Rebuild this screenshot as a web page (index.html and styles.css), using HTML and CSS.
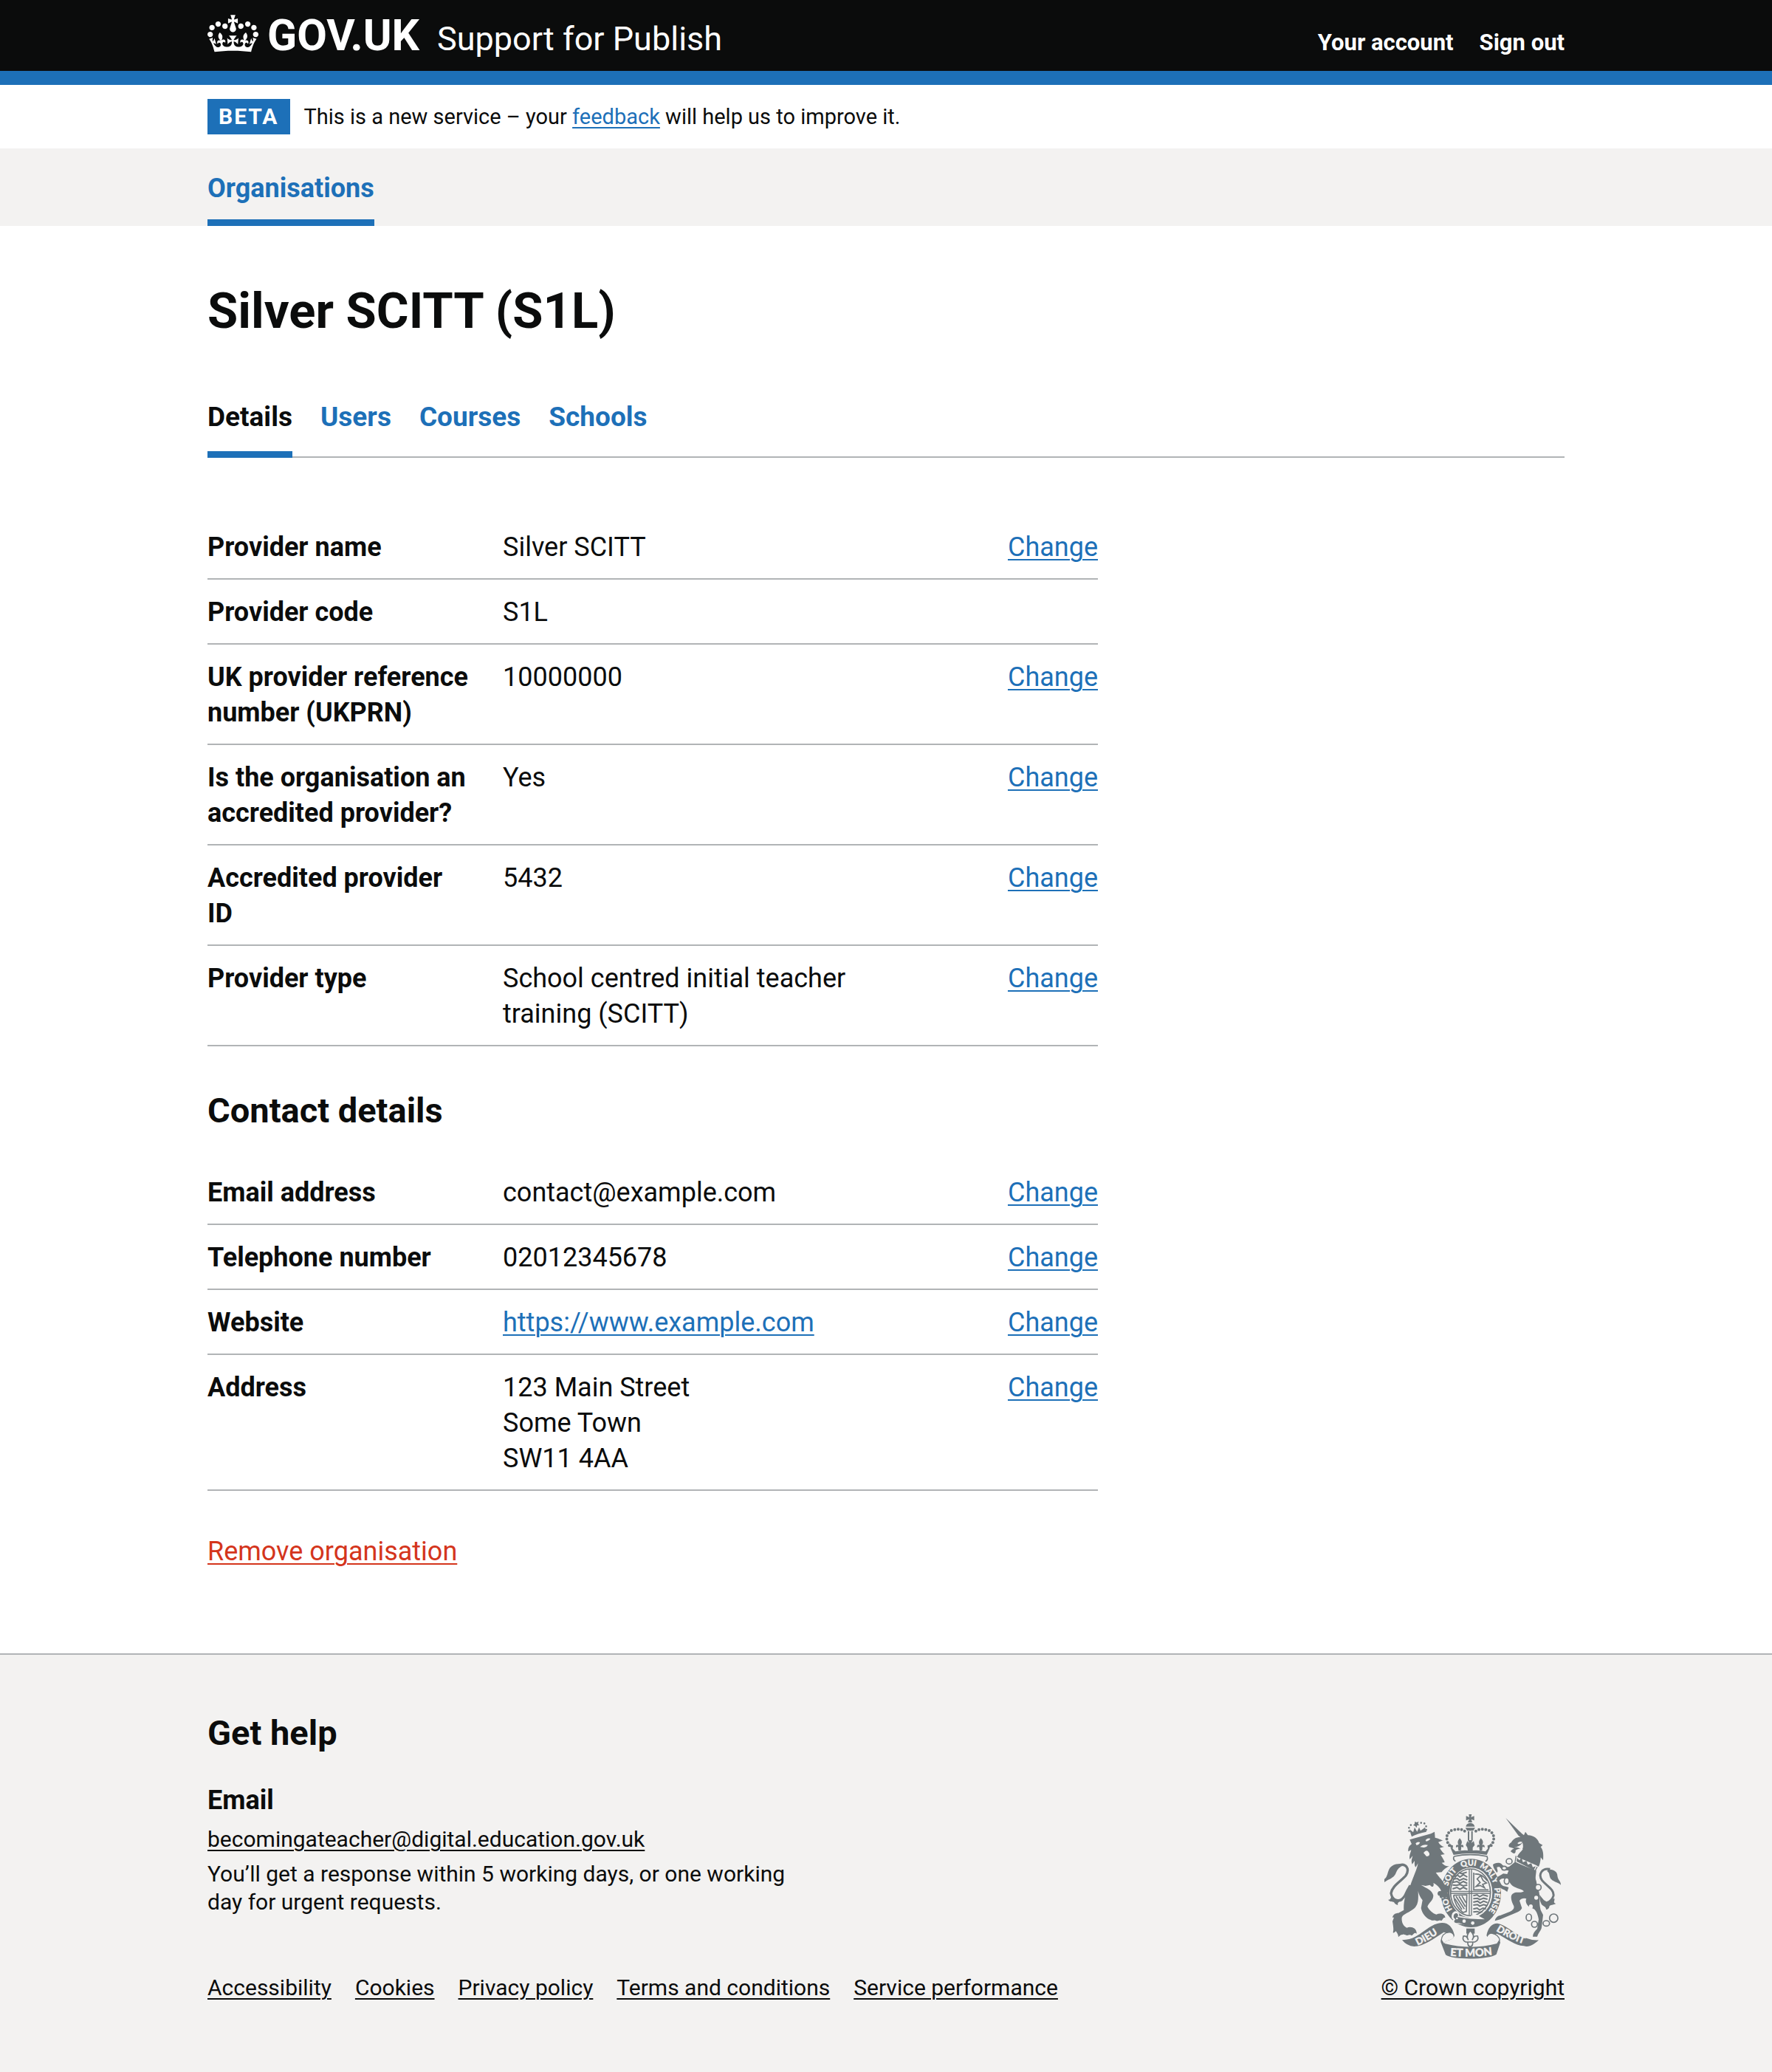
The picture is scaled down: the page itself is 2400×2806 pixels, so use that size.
FILE: index.html
```html
<!DOCTYPE html>
<html lang="en">
<head>
<meta charset="utf-8">
<meta name="viewport" content="width=device-width, initial-scale=1">
<title>Silver SCITT (S1L) - Support for Publish - GOV.UK</title>
<link rel="stylesheet" href="styles.css">
</head>
<body>
<header class="header">
  <div class="container header-inner">
    <div class="header-brand">
      <a class="logo" href="#">
        <svg class="logo-crown" viewBox="0 0 132 97" aria-hidden="true"><path fill="currentColor" fill-rule="evenodd" d="M25 30.2c3.5 1.5 7.7-.2 9.1-3.7 1.5-3.6-.2-7.8-3.9-9.2-3.6-1.4-7.6.3-9.1 3.9-1.4 3.5.3 7.5 3.9 9zM9 39.5c3.6 1.5 7.8-.2 9.2-3.7 1.5-3.6-.2-7.8-3.9-9.1-3.6-1.5-7.6.2-9.1 3.8-1.4 3.5.3 7.5 3.8 9zM4.4 57.2c3.5 1.5 7.7-.2 9.1-3.8 1.5-3.6-.2-7.7-3.9-9.1-3.5-1.5-7.6.3-9.1 3.8-1.4 3.5.3 7.6 3.9 9.1zm38.3-21.4c3.5 1.5 7.7-.2 9.1-3.8 1.5-3.6-.2-7.7-3.9-9.1-3.6-1.5-7.6.3-9.1 3.8-1.3 3.6.4 7.7 3.9 9.1zm64.4-5.6c-3.6 1.5-7.8-.2-9.1-3.7-1.5-3.6.2-7.8 3.8-9.2 3.6-1.4 7.7.3 9.2 3.9 1.3 3.5-.4 7.5-3.9 9zm15.9 9.3c-3.6 1.5-7.7-.2-9.1-3.7-1.5-3.6.2-7.8 3.7-9.1 3.6-1.5 7.7.2 9.2 3.8 1.5 3.5-.3 7.5-3.8 9zm4.7 17.7c-3.6 1.5-7.8-.2-9.2-3.8-1.5-3.6.2-7.7 3.9-9.1 3.6-1.5 7.7.3 9.2 3.8 1.3 3.5-.4 7.6-3.9 9.1zM89.3 35.8c-3.6 1.5-7.8-.2-9.2-3.8-1.4-3.6.2-7.7 3.9-9.1 3.6-1.5 7.7.3 9.2 3.8 1.4 3.6-.3 7.7-3.9 9.1zM69.7 17.7l8.9 4.7V9.3l-8.9 2.8c-.2-.3-.5-.6-.9-.9L72.4 0H59.6l3.5 11.2c-.3.3-.6.5-.9.9l-8.8-2.8v13.1l8.8-4.7c.3.3.6.7.9.9l-5 15.4v.1c-.2.8-.4 1.6-.4 2.4 0 4.1 3.1 7.5 7 8.1h.2c.3 0 .7.1 1 .1.4 0 .7 0 1-.1h.2c4-.6 7.1-4.1 7.1-8.1 0-.8-.1-1.7-.4-2.4V34l-5.1-15.4c.4-.2.7-.6 1-.9zM66 92.8c16.9 0 32.8 1.1 47.1 3.2 4-16.9 8.9-26.7 14-33.5l-9.6-3.4c1 4.9 1.1 7.2 0 10.2-1.5-1.4-3-4.3-4.2-8.7L108.6 76c2.8-2 5-3.2 7.5-3.3-4.4 9.4-10 11.9-13.6 11.2-4.3-.8-6.3-4.6-5.6-7.9 1-4.7 5.7-5.9 8-.5 4.3-8.7-3-11.4-7.6-8.8 7.1-7.2 7.9-13.5 2.1-21.1-8 6.1-8.1 12.3-4.5 20.8-4.7-5.4-12.1-2.5-9.5 6.2 3.4-5.2 7.9-2 7.2 3.1-.6 4.3-6.4 7.8-13.5 7.2-10.3-.9-10.9-8-11.2-13.8 2.5-.5 7.1 1.8 11 7.3L80.2 60c-4.1 4.4-8 5.3-12.3 5.4 1.4-4.4 8-11.6 8-11.6H55.5s6.4 7.2 7.9 11.6c-4.2-.1-8-1-12.3-5.4l1.4 16.4c3.9-5.5 8.5-7.7 10.9-7.3-.3 5.8-.9 12.8-11.1 13.8-7.2.6-12.9-2.9-13.5-7.2-.7-5 3.8-8.3 7.1-3.1 2.7-8.7-4.6-11.6-9.4-6.2 3.7-8.5 3.6-14.7-4.6-20.8-5.8 7.6-5 13.9 2.2 21.1-4.7-2.6-11.9.1-7.7 8.8 2.3-5.5 7.1-4.2 8.1.5.7 3.3-1.3 7.1-5.7 7.9-3.5.7-9-1.8-13.5-11.2 2.5.1 4.7 1.3 7.5 3.3l-4.7-15.4c-1.2 4.4-2.7 7.2-4.3 8.7-1.1-3-.9-5.3 0-10.2l-9.5 3.4c5 6.9 9.9 16.7 14 33.5 14.8-2.1 30.8-3.2 47.7-3.2z"/></svg>
        <span class="logo-text">GOV.UK</span>
      </a>
      <a class="service-name" href="#">Support for Publish</a>
    </div>
    <nav class="header-nav" aria-label="Account">
      <a href="#">Your account</a>
      <a href="#">Sign out</a>
    </nav>
  </div>
</header>

<div class="container phase-banner">
  <strong class="tag">BETA</strong>
  <span class="phase-text">This is a new service – your <a class="link" href="#">feedback</a> will help us to improve it.</span>
</div>

<nav class="primary-nav" aria-label="Primary">
  <div class="container">
    <a class="primary-nav-link" href="#" aria-current="page">Organisations</a>
  </div>
</nav>

<main class="container main">
  <h1 class="page-title">Silver SCITT (S1L)</h1>

  <nav class="tabs" aria-label="Organisation">
    <a class="tab tab-current" href="#" aria-current="page">Details</a>
    <a class="tab" href="#">Users</a>
    <a class="tab" href="#">Courses</a>
    <a class="tab" href="#">Schools</a>
  </nav>

  <div class="two-thirds">
    <dl class="summary">
      <div class="summary-row"><dt>Provider name</dt><dd>Silver SCITT</dd><dd class="action"><a class="link" href="#">Change</a></dd></div>
      <div class="summary-row"><dt>Provider code</dt><dd>S1L</dd></div>
      <div class="summary-row"><dt>UK provider reference number (UKPRN)</dt><dd>10000000</dd><dd class="action"><a class="link" href="#">Change</a></dd></div>
      <div class="summary-row"><dt>Is the organisation an accredited provider?</dt><dd>Yes</dd><dd class="action"><a class="link" href="#">Change</a></dd></div>
      <div class="summary-row"><dt>Accredited provider ID</dt><dd>5432</dd><dd class="action"><a class="link" href="#">Change</a></dd></div>
      <div class="summary-row"><dt>Provider type</dt><dd>School centred initial teacher training (SCITT)</dd><dd class="action"><a class="link" href="#">Change</a></dd></div>
    </dl>

    <h2 class="section-title">Contact details</h2>
    <dl class="summary">
      <div class="summary-row"><dt>Email address</dt><dd>contact@example.com</dd><dd class="action"><a class="link" href="#">Change</a></dd></div>
      <div class="summary-row"><dt>Telephone number</dt><dd>02012345678</dd><dd class="action"><a class="link" href="#">Change</a></dd></div>
      <div class="summary-row"><dt>Website</dt><dd><a class="link" href="#">https://www.example.com</a></dd><dd class="action"><a class="link" href="#">Change</a></dd></div>
      <div class="summary-row"><dt>Address</dt><dd>123 Main Street<br>Some Town<br>SW11 4AA</dd><dd class="action"><a class="link" href="#">Change</a></dd></div>
    </dl>

    <p class="remove"><a class="link link-danger" href="#">Remove organisation</a></p>
  </div>
</main>

<footer class="footer">
  <div class="container footer-inner">
    <div class="footer-main">
      <h2 class="footer-title">Get help</h2>
      <h3 class="footer-subtitle">Email</h3>
      <p class="footer-email"><a class="link link-plain" href="#">becomingateacher@digital.education.gov.uk</a></p>
      <p class="footer-note">You’ll get a response within 5 working days, or one working day for urgent requests.</p>
      <ul class="footer-links">
        <li><a class="link link-plain" href="#">Accessibility</a></li>
        <li><a class="link link-plain" href="#">Cookies</a></li>
        <li><a class="link link-plain" href="#">Privacy policy</a></li>
        <li><a class="link link-plain" href="#">Terms and conditions</a></li>
        <li><a class="link link-plain" href="#">Service performance</a></li>
      </ul>
    </div>
    <div class="footer-meta">
      <svg class="crest" viewBox="73 81 717 588" aria-hidden="true">
        <defs>
          <path id="garter" d="M425 511A96 111 0 0 1 425 289A96 111 0 0 1 425 511"/>
          <path id="ribbon-left" d="M208 614Q252 594 306 556"/>
          <path id="ribbon-mid" d="M340 656Q425 664 512 652"/>
          <path id="ribbon-right" d="M526 554Q580 588 650 612"/>
        </defs>
        <!-- lion -->
        <g class="ink">
          <path d="M176 184L262 160L277 152L279 176C296 180 306 186 312 187L292 194C300 206 308 212 316 213L298 218C308 234 316 242 319 243L302 246C312 262 316 270 318 276L306 278C318 290 328 294 338 290C324 298 312 306 306 316L282 318C300 342 318 362 326 390L338 412C336 424 328 420 322 416C322 426 314 428 311 418C304 424 296 422 298 412C288 412 286 400 294 394L304 392C298 378 284 366 272 360C276 370 270 384 258 368L240 372L222 368C248 384 266 388 272 410C272 432 254 438 248 456C256 472 270 484 284 488C300 480 322 486 320 502C312 498 312 508 304 514C298 508 292 516 284 514C276 508 268 516 262 510C244 506 226 484 222 462L228 430C218 418 212 404 210 392C212 430 210 446 196 462C176 480 148 486 144 500C142 520 150 534 164 542C182 534 206 544 204 566C196 558 192 568 184 574C176 566 170 576 162 572C154 570 152 566 146 570C138 570 134 576 130 580C130 570 124 562 120 556C114 560 110 566 108 560C112 550 108 530 106 516L112 500L106 500C108 488 118 482 130 482L152 470C150 440 158 400 180 366C188 340 204 310 210 280L200 296C194 288 196 280 196 270L186 284C180 270 186 260 188 250L176 264C172 250 180 238 182 226L170 232C168 214 178 206 184 202Z"/>
          <path d="M146 287C132 278 108 284 96 298C84 316 88 334 73 344L72 358C90 344 108 342 118 324C124 308 130 298 146 290Z"/>
          <path d="M102 412C98 424 98 430 88 428C96 438 106 434 112 438C116 446 122 448 128 450C126 442 130 436 140 436L150 428L120 430Z"/>
        </g>
        <path class="line" stroke-width="10" d="M128 290C160 276 178 302 160 330C140 354 104 372 100 402C106 434 136 442 156 412Q166 390 178 370"/>
        <g class="paper">
          <path d="M200 199Q208 190 218 195Q214 206 203 206ZM240 186Q250 176 260 180Q254 190 243 191ZM218 214Q230 202 250 206Q246 214 234 216ZM232 238Q246 218 256 240Q258 252 244 252Z"/>
        </g>
        <!-- lion's crown -->
        <g class="ink">
          <path d="M180 160L175 142L190 154L196 134L206 152L214 134L220 148L238 134L244 152Q208 158 184 172Z"/>
          <path d="M197 111L205 114L212 110L210 120L215 126L206 126L204 136L198 128L190 126L196 120Z"/>
        </g>
        <path class="dots" stroke-width="8" d="M174 150Q168 124 190 122M243 144Q246 112 220 116"/>
        <!-- royal crown -->
        <g class="ink">
          <path d="M416 81H428L425 93L438 88V106L426 101L430 114H412L418 101L405 106V88L418 93Z"/>
          <path d="M404 131Q406 118 422 116Q438 118 440 131ZM402 136H442L434 148H410Z"/>
          <path d="M352 222L362 232Q390 226 412 228L410 216L404 206L410 190L418 198L412 186H432L426 198L436 190L440 206L432 216L432 228Q460 226 484 232L492 222L502 216L489 246Q422 234 354 246L341 216Z"/>
          <path d="M379 178Q394 194 384 206Q396 202 394 216L386 212L384 228H374L372 212L364 216Q362 202 374 206Q366 194 379 178ZM465 178Q480 194 470 206Q482 202 480 216L472 212L470 228H460L458 212L450 216Q448 202 460 206Q452 194 465 178Z"/>
          <path d="M338 196Q340 206 352 208L350 224L338 210ZM506 196Q504 206 492 208L494 224L506 210Z"/>
        </g>
        <path class="line" stroke-width="6" d="M415 150V186M429 150V186"/>
        <path class="dots" stroke-width="12" d="M337 208C318 180 326 154 350 145C376 138 398 142 406 158M507 208C526 180 518 154 494 145C468 138 446 142 438 158"/>
        <path class="line" stroke-width="5" d="M356 252Q422 238 490 252Q496 266 484 272M356 252Q350 264 362 272"/>
        <!-- garter and shield -->
        <path class="ink" fill-rule="evenodd" d="M425 262A122 139 0 1 1 425 540A122 139 0 1 1 425 262ZM425 297A87 102 0 1 0 425 501A87 102 0 1 0 425 297Z"/>
        <ellipse class="line" stroke-width="5" cx="423" cy="398" rx="81" ry="95"/>
        <path class="line" stroke-width="4" d="M418 304V490M427 304V490M342 394H504M342 402H504"/>
        <path class="line" stroke-width="6" d="M356 334l14-6l10 8l14-10l16 10M352 344l18-2l8 8l16-8l16 6M350 358l18-4l12 8l14-8l16 8M350 368l16 2l14-4l14 6l16-4M350 384l18-6l12 8l14-8l16 8M376 318l12 4l20-6M434 412l16-4l10 8l14-8l20 6M434 424l18-2l8 6l16-6l16 4M434 438l18-4l10 8l14-8l16 6M434 450l18-2l8 6l16-6l14 4M434 466l16-4l10 8l14-8l12 4M434 478l16-2l10 4l12-4"/>
        <path class="line" stroke-width="5" d="M436 318V388H496M440 324Q468 320 492 352M446 374L462 358L450 344L464 330L474 350L488 360L472 366L480 380L462 370ZM354 410L408 408L406 476L392 480Q360 456 354 410M364 414L398 466M376 414L402 456M388 412L404 440M360 424L388 468"/>
        <path class="halo" d="M352 484C366 470 378 486 372 496L414 504L440 488L476 508Q440 536 372 522C356 530 344 516 358 510Q344 500 352 484Z"/>
        <path class="ink" d="M356 488C366 476 378 488 370 498Q420 508 486 508L470 528Q430 546 376 522C360 526 350 518 362 508Q350 500 356 488Z"/>
        <g class="paper"><circle cx="397" cy="515" r="7"/><circle cx="432" cy="523" r="7"/><circle cx="368" cy="504" r="4"/></g>
        <g class="motto" font-size="32">
          <text><textPath href="#garter" startOffset="90">HON</textPath></text>
          <text><textPath href="#garter" startOffset="190">SOIT</textPath></text>
          <text><textPath href="#garter" startOffset="286">QUI</textPath></text>
          <text><textPath href="#garter" startOffset="360">MAL</textPath></text>
          <text><textPath href="#garter" startOffset="430">Y</textPath></text>
          <text><textPath href="#garter" startOffset="468">PENSE</textPath></text>
        </g>
        <path class="ink" d="M300 340C316 360 326 380 330 402L338 414Q334 426 324 418Q318 428 311 418Q302 424 298 412Q288 408 294 396L306 392Z"/>
        <!-- unicorn -->
        <g class="ink">
          <path d="M566 96L632 160L640 166L646 152L656 166C680 166 698 182 702 198L716 206L708 214C718 226 720 242 718 268L708 256C708 270 704 286 700 294L690 288L612 254C618 240 630 232 636 222C626 218 612 222 606 228C608 236 602 244 594 238L586 232C588 226 596 222 600 220L580 214C576 208 580 200 588 196C596 182 606 174 626 174L618 168Z"/>
          <path d="M602 276L690 310C690 326 684 340 690 352C692 370 700 382 702 400C706 420 700 440 708 470L718 490L712 540C710 554 700 560 694 578L676 578C676 566 684 556 694 546L700 508C694 476 684 462 668 462C650 452 644 432 650 424C640 420 628 424 622 432L632 462C626 476 610 480 596 486L544 508L522 514C524 502 532 494 544 492L584 476C598 470 604 460 596 448C588 430 584 412 594 404C610 392 624 404 640 394C626 380 604 384 588 366C576 350 580 346 572 344C556 340 546 342 540 350L548 366C556 376 566 372 578 378L572 396L560 388C552 386 546 380 540 376C532 364 528 346 532 336L556 322L572 324L578 310C564 306 550 308 540 294L530 296C532 308 536 314 530 318C522 308 516 300 514 286C520 278 540 276 548 282C556 292 568 298 580 294Z"/>
          <path d="M738 306C758 302 776 314 776 330C778 350 790 352 790 368C780 358 762 356 752 346C740 336 748 320 734 312Z"/>
          <path d="M704 408C716 424 724 436 736 436C752 436 760 420 764 424C766 434 756 440 770 444C758 450 748 448 744 454C742 464 738 468 730 468C730 458 722 456 712 448Q702 430 704 408Z"/>
        </g>
        <path class="line" stroke-width="9" d="M746 304C714 298 696 324 714 350C732 372 764 386 760 412Q754 432 734 440"/>
        <path class="line" stroke-width="4" d="M608 250L604 276L684 314L694 294"/>
        <path class="ink" d="M610 272L612 258L622 268L630 256L636 276L650 270L656 286L670 280L676 296L688 292L680 308Z"/>
        <path class="paper" d="M614 198Q624 188 634 194Q628 202 616 202ZM600 214Q624 214 634 196Q640 214 632 226Q618 214 600 214Z"/>
        <g class="chain" stroke-width="5">
          <ellipse cx="580" cy="272" rx="12" ry="11"/><ellipse cx="560" cy="300" rx="10" ry="8"/><ellipse cx="570" cy="352" rx="10" ry="13"/><ellipse cx="698" cy="378" rx="12" ry="12"/><ellipse cx="660" cy="500" rx="11" ry="14"/><ellipse cx="683" cy="528" rx="12" ry="12"/><ellipse cx="731" cy="524" rx="13" ry="11"/><circle cx="761" cy="503" r="17"/>
        </g>
        <g class="paper"><circle cx="690" cy="420" r="8"/><ellipse cx="668" cy="456" rx="8" ry="9"/></g>
        <!-- ribbon -->
        <path class="ink" d="M145 592Q178 590 196 580C236 560 262 524 308 522C334 522 350 540 358 572C356 584 344 590 330 594Q318 598 318 606Q424 634 530 606C526 594 500 592 488 574C492 546 508 524 532 524C570 530 600 570 650 584Q676 594 700 592C680 612 660 622 640 616C596 612 568 582 530 566Q512 572 512 580C530 584 544 590 544 602L528 650C500 672 350 674 322 652L302 600C300 586 320 574 332 576Q330 562 314 560C276 584 232 618 194 618Q164 616 145 592Z"/>
        <path class="paper" d="M306 590C306 574 318 562 334 562C348 562 356 572 354 582C344 594 324 590 316 606ZM540 590C540 578 524 566 508 566C496 568 490 576 494 584C504 594 520 590 530 606Z"/>
        <path class="line" stroke-width="4" d="M304 594C306 572 320 562 336 560M542 594C540 578 526 566 508 564"/>
        <g class="motto">
          <text font-size="40"><textPath href="#ribbon-left">DIEU</textPath></text>
          <text font-size="44"><textPath href="#ribbon-mid">ET MON</textPath></text>
          <text font-size="40"><textPath href="#ribbon-right">DROIT</textPath></text>
        </g>
        <!-- fleur-de-lis -->
        <path class="ink" d="M406 545H440V566H406Z"/>
        <path class="petal" stroke-width="5" d="M422 554Q444 574 430 592Q436 572 452 576Q458 594 440 600H432Q434 614 422 620Q410 614 412 600H404Q388 594 394 576Q408 572 414 592Q402 574 422 554ZM404 600H440"/>
      </svg>
      <a class="link link-plain" href="#">© Crown copyright</a>
    </div>
  </div>
</footer>
</body>
</html>
```

FILE: styles.css
```css
:root {
  --ink: #0b0c0c;
  --blue: #1d70b8;
  --red: #d4351c;
  --rule: #b1b4b6;
  --pale: #f3f2f1;
  --crest: #6f777b;
}

* {
  box-sizing: border-box;
}

body,
h1,
h2,
h3,
p,
dl,
dd,
ul {
  margin: 0;
  padding: 0;
}

body {
  background: #fff;
  color: var(--ink);
  font-family: Roboto, "Liberation Sans", sans-serif;
  font-size: 36px;
  line-height: 48px;
}

.container {
  max-width: 1838px;
  margin: 0 auto;
}

/* Links */

.link {
  color: var(--blue);
  text-decoration: underline;
  text-decoration-thickness: 2px;
  text-underline-offset: 4px;
}

.link-plain {
  color: var(--ink);
}

.link-danger {
  color: var(--red);
}

/* Header */

.header {
  background: var(--ink);
  border-bottom: 19px solid var(--blue);
  color: #fff;
}

.header a {
  color: inherit;
  text-decoration: none;
}

.header-inner {
  display: flex;
  justify-content: space-between;
  align-items: baseline;
  padding: 18px 0;
}

.header-brand {
  display: flex;
  align-items: baseline;
  gap: 24px;
}

.logo {
  display: flex;
  align-items: baseline;
  gap: 12px;
}

.logo-crown {
  align-self: flex-start;
  width: 69px;
  height: 51px;
  margin-top: 2px;
}

.logo-text {
  font-size: 59px;
  font-weight: 700;
  line-height: 60px;
}

.service-name {
  font-size: 45px;
}

.header-nav {
  display: flex;
  gap: 35px;
  font-size: 31px;
  font-weight: 700;
  line-height: 38px;
}

/* Phase banner */

.phase-banner {
  display: flex;
  gap: 19px;
  padding: 19px 0;
}

.tag {
  padding: 0 15px;
  background: var(--blue);
  color: #fff;
  font-size: 30px;
  letter-spacing: 2px;
}

.phase-text {
  font-size: 29px;
}

/* Primary navigation */

.primary-nav {
  background: var(--pale);
}

.primary-nav-link {
  display: inline-block;
  vertical-align: top;
  padding: 30px 0 18px;
  border-bottom: 9px solid var(--blue);
  color: var(--blue);
  font-weight: 700;
  text-decoration: none;
}

/* Main content */

.main {
  padding: 77px 0 114px;
}

.page-title {
  margin-bottom: 62px;
  font-size: 67px;
  line-height: 77px;
}

.tabs {
  display: flex;
  gap: 38px;
  margin-bottom: 77px;
  box-shadow: inset 0 -2px var(--rule);
}

.tab {
  padding: 19px 0 22px;
  border-bottom: 9px solid transparent;
  color: var(--blue);
  font-size: 37px;
  font-weight: 700;
  text-decoration: none;
}

.tab-current {
  border-color: var(--blue);
  color: var(--ink);
}

.two-thirds {
  max-width: 1206px;
}

.summary-row {
  display: grid;
  grid-template-columns: 400px 1fr 20%;
  padding: 20px 0 18px;
  border-bottom: 2px solid var(--rule);
}

.summary-row dt {
  padding-right: 44px;
  font-weight: 700;
}

.summary-row dd {
  padding-right: 38px;
}

.summary-row .action {
  padding-right: 0;
  text-align: right;
}

.section-title {
  margin: 58px 0 39px;
  font-size: 47px;
  line-height: 57px;
}

.remove {
  margin-top: 58px;
}

/* Footer */

.footer {
  padding: 77px 0 95px;
  border-top: 2px solid var(--rule);
  background: var(--pale);
  font-size: 30px;
  line-height: 38px;
}

.footer-inner {
  display: flex;
  justify-content: space-between;
  align-items: flex-end;
}

.footer-title {
  margin-bottom: 39px;
  font-size: 47px;
  line-height: 57px;
}

.footer-subtitle {
  margin-bottom: 10px;
  font-size: 36px;
  line-height: 48px;
}

.footer-email {
  margin-bottom: 9px;
}

.footer-note {
  max-width: 800px;
  margin-bottom: 78px;
}

.footer-links {
  display: flex;
  gap: 32px;
  list-style: none;
}

.footer-meta {
  display: flex;
  flex-direction: column;
  align-items: center;
  gap: 20px;
}

/* Royal coat of arms */

.crest {
  width: 239px;
  height: 196px;
}

.crest .ink {
  fill: var(--crest);
}

.crest .paper {
  fill: var(--pale);
}

.crest .line {
  fill: none;
  stroke: var(--crest);
}

.crest .dots {
  fill: none;
  stroke: var(--crest);
  stroke-linecap: round;
  stroke-dasharray: 0 14;
}

.crest .halo {
  fill: var(--pale);
  stroke: var(--pale);
  stroke-width: 6px;
}

.crest .chain,
.crest .petal {
  fill: var(--pale);
  stroke: var(--crest);
}

.crest .motto {
  fill: var(--pale);
  stroke: var(--pale);
  stroke-width: 1px;
  font-family: Lato, sans-serif;
  font-weight: 900;
}
```
